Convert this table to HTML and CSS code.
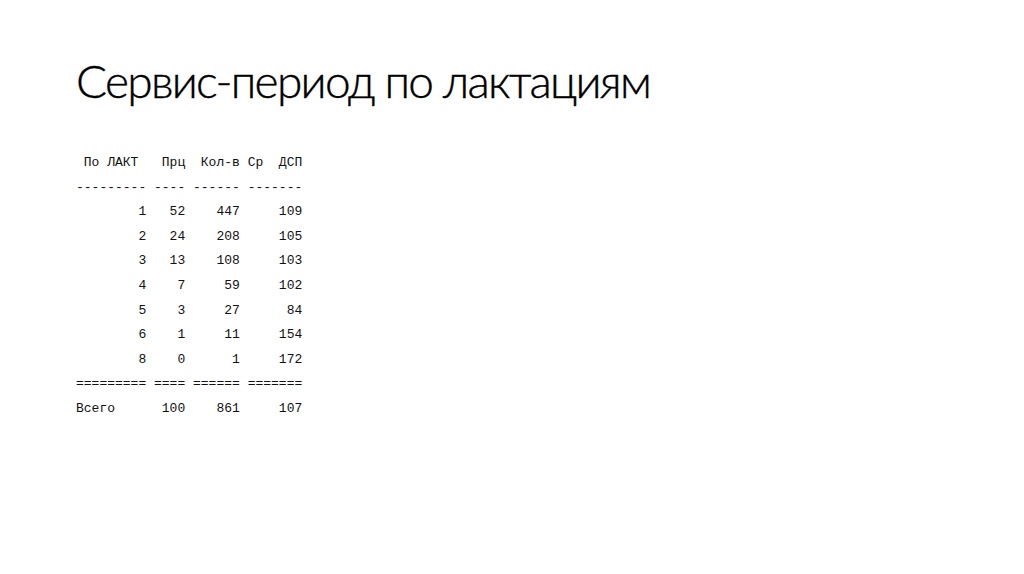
FILE: index.html
```html
<!DOCTYPE html>
<html lang="ru">
<head>
<meta charset="utf-8">
<link rel="stylesheet" href="styles.css">
</head>
<body>
<div class="slide">
  <h1 class="title">Сервис-период по лактациям</h1>
  <pre class="report"> По ЛАКТ   Прц  Кол-в Ср  ДСП
--------- ---- ------ -------
        1   52    447     109
        2   24    208     105
        3   13    108     103
        4    7     59     102
        5    3     27      84
        6    1     11     154
        8    0      1     172
========= ==== ====== =======
Всего      100    861     107</pre>
</div>
</body>
</html>
```

FILE: styles.css
```css
html, body {
  margin: 0;
  padding: 0;
  background: #ffffff;
}
.slide {
  width: 1024px;
  height: 574px;
  box-sizing: border-box;
  padding: 53px 0 0 76px;
  display: flex;
  flex-direction: column;
}
.title {
  margin: 0;
  font-family: Lato, "Open Sans", sans-serif;
  font-weight: 300;
  font-size: 46px;
  letter-spacing: -1.7px;
  line-height: 56px;
  -webkit-text-stroke: 0.4px #000;
  color: #000;
}
.report {
  margin: 42px 0 0 0;
  font-family: "Liberation Mono", "DejaVu Sans Mono", monospace;
  font-size: 13px;
  line-height: 24.6px;
  color: #111;
}
```
